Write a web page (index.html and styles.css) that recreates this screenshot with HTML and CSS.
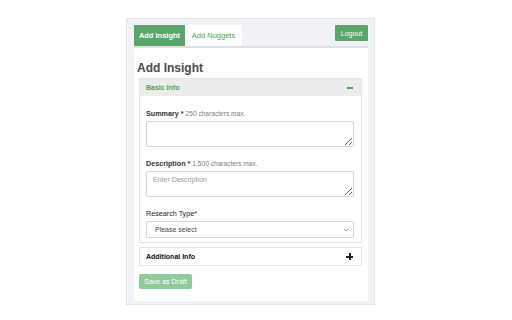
FILE: index.html
```html
<!DOCTYPE html>
<html>
<head>
<meta charset="utf-8">
<link rel="stylesheet" href="styles.css">
</head>
<body>
<div class="panel">
  <div class="topbar">
    <div class="tabs">
      <div class="tab active">Add Insight</div>
      <div class="tab">Add Nuggets</div>
    </div>
    <button class="logout">Logout</button>
  </div>
  <div class="card">
    <h1 class="title">Add Insight</h1>
    <div class="acc">
      <div class="acc-head green">
        <span>Basic Info</span>
        <span class="minus"></span>
      </div>
      <div class="acc-body">
        <div class="field">
          <div class="lbl">Summary * <span class="hint">250 characters max.</span></div>
          <textarea class="ta"></textarea>
        </div>
        <div class="field">
          <div class="lbl">Description * <span class="hint">1,500 characters max.</span></div>
          <textarea class="ta" placeholder="Enter Description"></textarea>
        </div>
        <div class="field">
          <div class="lbl normal sel">Research Type*</div>
          <div class="select"><span>Please select</span>
            <svg width="6" height="4" viewBox="0 0 6 4"><path d="M0.8 0.8 L3 3 L5.2 0.8" fill="none" stroke="#888" stroke-width="0.8"/></svg>
          </div>
        </div>
      </div>
    </div>
    <div class="acc second">
      <div class="acc-head plain">
        <span>Additional Info</span>
        <span class="plus"></span>
      </div>
    </div>
    <button class="draft">Save as Draft</button>
  </div>
</div>
</body>
</html>
```
FILE: styles.css
```css
* { box-sizing: border-box; }
html, body { margin: 0; padding: 0; background: #fff; }
body {
  font-family: "Liberation Sans", Arial, sans-serif;
  padding: 18px 0 0 126px;
}
.panel {
  width: 249px;
  height: 287px;
  background: #f1f2f5;
  border: 1px solid #e3e5e9;
  padding: 6px 6px 3px 7px;
  display: flex;
  flex-direction: column;
}
.topbar {
  display: flex;
  justify-content: space-between;
  align-items: flex-start;
  height: 21px;
}
.tabs { display: flex; height: 21px; }
.tab {
  height: 21px;
  display: flex;
  align-items: center;
  justify-content: center;
  font-size: 7.5px;
  color: #44a64e;
  background: #fff;
  width: 57px;
}
.tab.active {
  background: #5aa66a;
  color: #fff;
  font-weight: bold;
  width: 51px;
}
.logout {
  width: 33px;
  height: 16px;
  border: 0;
  border-radius: 1px;
  background: #5aa66a;
  color: #fff;
  font-family: inherit;
  font-size: 7px;
  padding: 0;
}
.card {
  flex: 1;
  background: #fff;
  border-top: 2px solid #dde0e5;
  padding: 0 6px 0 5px;
  display: flex;
  flex-direction: column;
}
.title {
  margin: 12px 0 0 -2px;
  font-size: 12px;
  font-weight: bold;
  color: #4a4a4a;
  line-height: 16px;
  height: 16px;
}
.acc {
  margin-top: 2px;
  border: 1px solid #e6e6e6;
}
.acc.second { margin-top: 4px; }
.acc-head {
  display: flex;
  align-items: center;
  justify-content: space-between;
  padding: 0 8px 0 6px;
  font-size: 7px;
  font-weight: bold;
}
.acc-head.green { background: #ececec; color: #44a64e; height: 17px; }
.acc-head.plain { background: #fff; color: #111; height: 17px; }
.minus { width: 6px; height: 2px; background: #44a64e; }
.plus { position: relative; width: 7px; height: 7px; }
.plus::before, .plus::after {
  content: "";
  position: absolute;
  background: #222;
}
.plus::before { left: 0; top: 2.5px; width: 7px; height: 2px; }
.plus::after { left: 2.5px; top: 0; width: 2px; height: 7px; }
.acc-body {
  padding: 13px 7px 4px 6px;
}
.field { display: flex; flex-direction: column; }
.field + .field { margin-top: 12px; }
.lbl {
  display: block;
  font-size: 7.2px;
  font-weight: bold;
  color: #333;
  line-height: 9px;
  height: 9px;
  margin-bottom: 3px;
}
.lbl.normal { font-weight: normal; color: #222; }
.hint {
  font-size: 6.6px;
  line-height: 9px;
  font-weight: normal;
  color: #7d7d7d;
}
.ta {
  display: block;
  width: 100%;
  height: 26px;
  border: 1px solid #d4d4d4;
  border-radius: 2px;
  font-family: inherit;
  font-size: 7px;
  padding: 4px 6px;
  margin: 0;
  resize: vertical;
}
.ta::placeholder { color: #999; }
.select {
  height: 17px;
  border: 1px solid #d4d4d4;
  border-radius: 2px;
  display: flex;
  align-items: center;
  justify-content: space-between;
  padding: 0 4px 0 8px;
  font-size: 7px;
  color: #444;
}
.draft {
  margin-top: 8px;
  align-self: flex-start;
  width: 53px;
  height: 15px;
  border: 0;
  border-radius: 2px;
  background: #8fcb9c;
  color: #fff;
  font-family: inherit;
  font-size: 7px;
  padding: 0;
}
```
